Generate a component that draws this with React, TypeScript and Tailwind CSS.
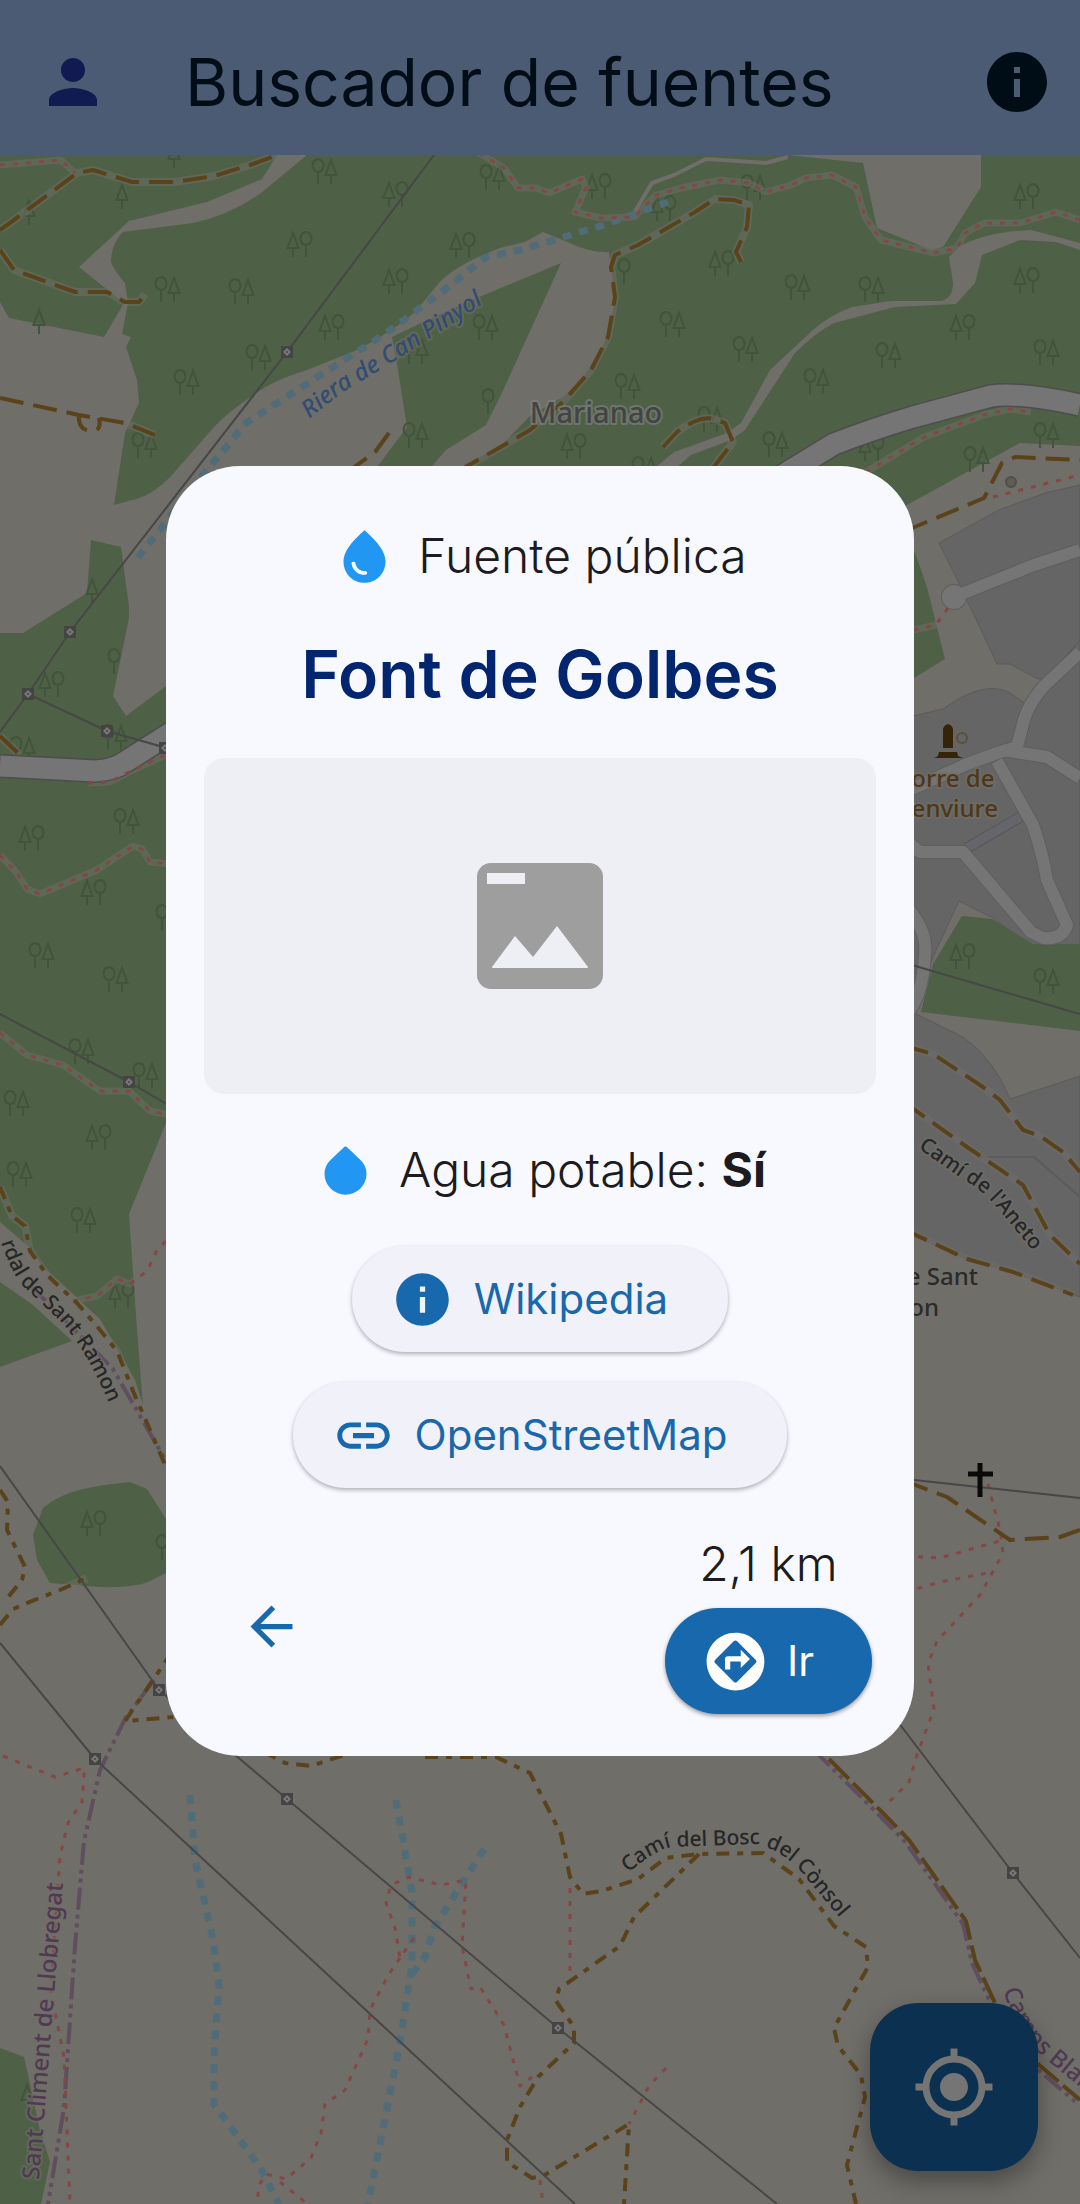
import React from "react";
import {
  MdArrowBack,
  MdAssistantDirection,
  MdInfo,
  MdLink,
  MdMyLocation,
  MdPerson,
  MdWaterDrop,
} from "react-icons/md";

type TreeKind = "OA" | "AO" | "O" | "A";

const trees: [number, number, TreeKind][] = [
  [325, 172, "OA"], [396, 195, "AO"], [493, 178, "OA"], [300, 245, "AO"], [463, 246, "AO"],
  [168, 290, "OA"], [242, 292, "OA"], [396, 282, "AO"], [332, 328, "AO"], [486, 328, "OA"],
  [259, 358, "OA"], [187, 383, "OA"], [416, 352, "OA"], [488, 402, "O"], [416, 436, "OA"],
  [145, 446, "OA"], [599, 187, "AO"], [664, 209, "AO"], [1027, 197, "AO"], [624, 272, "O"],
  [722, 264, "AO"], [798, 288, "OA"], [872, 290, "OA"], [1027, 281, "AO"], [673, 325, "OA"],
  [963, 328, "AO"], [746, 350, "OA"], [889, 356, "OA"], [1047, 353, "OA"], [628, 387, "OA"],
  [817, 382, "OA"], [711, 420, "OA"], [574, 447, "AO"], [776, 445, "OA"], [1047, 436, "OA"],
  [977, 460, "OA"], [872, 449, "AO"], [645, 470, "OA"], [754, 188, "OA"], [122, 197, "A"],
  [29, 213, "A"], [174, 156, "A"], [39, 322, "A"], [92, 591, "A"], [52, 685, "AO"],
  [114, 662, "O"], [32, 839, "AO"], [127, 822, "OA"], [94, 893, "AO"], [162, 918, "O"],
  [42, 956, "OA"], [116, 980, "OA"], [82, 1052, "OA"], [146, 1076, "OA"], [17, 1104, "OA"],
  [99, 1138, "AO"], [23, 750, "OA"], [115, 738, "OA"], [20, 1175, "OA"], [84, 1221, "OA"],
  [122, 1296, "AO"], [94, 1524, "AO"], [162, 1548, "O"], [27, 2097, "A"],
];

const round = (x: number) => `M${x} 12V0a5.5 6.5 0 1 1 0.1 0`;
const pine = (x: number) => `M${x} 12V3M${x} -12l-5.5 15h11z`;

const treeShape: Record<TreeKind, string> = {
  OA: round(-7) + pine(6),
  AO: pine(-7) + round(6),
  O: round(0),
  A: pine(0),
};

const forests = [
  "M0 155H1080V446L1020 443 905 506 914 550 927 587 945 659 914 678 200 686 200 1080 166 1123 129 1214 137 1330 143 1405 135 1380 100 1319 43 1267 28 1246 0 1222Z",
  "M0 1282 33 1305 72 1341 0 1367Z",
  "M33 1535 43 1508Q60 1494 83 1489T130 1482L147 1489 166 1519 190 1545 166 1573 150 1581Q135 1588 100 1587L50 1583 37 1560Z",
  "M0 2048 24 2057 32 2093 39 2126 50 2162 41 2204H0Z",
];

const clearings = [
  "M277 155 262 179 207 202 129 221 79 267 124 303 104 337 9 318 0 302V633H23L87 593 91 540 121 547 129 607V618L113 696 126 716 166 686H464V465L500 447 530 416 563 397 581 380 600 353 609 330 615 300 609 252Q590 253 570 243L543 232 525 242 500 248Q455 265 439 283L414 313Q390 333 357 350L307 370Q275 380 261 390 230 410 214 427L179 467Q155 496 132 500L114 505 125 433 139 403 137 380 126 347 131 337 122 334 128 303 125 283Q110 265 111 260 112 243 123 232L193 223Q230 215 261 193L307 155Z",
  "M788 155 863 163 877 228 931 250 943 247 981 187V155Z",
  "M1080 243 1031 230Q985 232 959 247L949 257 953 283Q953 298 941 301H891L852 307Q830 315 813 330L770 370 741 423 727 433 674 452 656 467H677L691 455 731 440 745 430 795 353Q815 333 834 323L895 307 956 304 975 283 982 255 1020 240 1056 242 1080 250Z",
];

const woods = [
  "M561 263 479 297 421 323 392 337 398 370 407 427 378 466H432L446 450 486 425 500 397Z",
];

const blocks = [
  "M939 543 977 522 999 510 1045 493 1080 485V640L1048 677 1038 679 1010 664H997L967 600 961 587Z",
  "M900 719 943 709 960 698Q990 682 1010 693L1026 704 1048 677 1080 640V945H1030L993 918 959 901 933 957 914 1010H900Z",
  "M900 1006 963 1037Q995 1060 1010 1099L1080 1076V1297L1013 1272 967 1259 900 1230Z",
];

const park = "M962 916 992 919 1033 944H1080V1031L921 1012 933 964Z";

const streets = [
  "M1080 652 1043 687Q1028 705 1024 720L1017 747 1000 752 967 764 905 792",
  "M1003 750 1047 757 1080 778",
  "M997 761 1033 825Q1043 855 1047 880L1067 925Q1062 940 1043 938L1031 932 963 852H920L905 840",
  "M905 905Q928 930 925 955 922 1000 905 1015",
  "M954 597 1034 565 1080 550",
];

const highways = [
  "M760 490 788 472 834 444Q870 430 913 417L991 396Q1020 392 1080 405",
  "M0 766 95 771Q115 770 125 762L180 727",
];

const tracks = [
  "M0 230 14 220 77 173 93 170 132 182H175L214 176 250 165 277 155",
  "M0 250 14 270 75 292H107L125 302H139L145 294",
  "M0 398 79 415 125 423 155 435",
  "M79 415Q78 428 87 430M99 418Q101 426 97 430",
  "M741 262 736 252 747 227 749 205 734 200 715 199 695 212 638 245 615 255 611 267 615 297 608 337 591 370 563 402 530 430 464 468",
  "M389 433 375 452 353 468",
  "M663 447 677 432Q700 415 713 419L725 423 733 442 713 468",
  "M905 531 984 498 1002 463 1015 457 1080 460",
  "M905 1046 933 1054 983 1087 1000 1100 1023 1130 1040 1136 1063 1152 1080 1172",
  "M905 1103 967 1147 1023 1185 1050 1235 1080 1264",
  "M905 1230 967 1259 1013 1272 1073 1295",
  "M905 1481 947 1497 1010 1540 1060 1537 1080 1530",
  "M0 736 20 755",
];

const shortTracks = [
  "M0 1187 12 1216 25 1226 30 1251 47 1275 77 1303 100 1330 117 1351 133 1391 170 1476",
  "M0 1490 8 1502 7 1530 25 1567 22 1580 5 1601",
  "M0 1625 13 1609 37 1599 60 1590 87 1578",
  "M172 1652 125 1721 175 1717",
  "M264 1752 285 1763 311 1766 347 1754",
  "M425 1757 496 1757 530 1773 561 1834 570 1877 583 1894 602 1891 638 1879 666 1858 699 1854 763 1853 799 1879 834 1926 866 1947 868 1967 834 2028 838 2046 861 2075 865 2097 847 2165 856 2204",
  "M699 1854 634 1917 620 1946 559 1989 556 2001 574 2027V2043L538 2077 520 2107 507 2140V2162L532 2178 543 2176 629 2124 624 2204",
];

const footpaths = [
  "M0 165 61 160 75 173",
  "M479 153 504 168 518 188H536L549 193 582 179 586 187 575 212 600 218 634 217 656 195 681 188 720 180 749 183 766 192 791 185 806 178 832 175 856 187 865 217 881 240 934 253 957 248 965 233 984 223H1020L1056 212 1080 220",
  "M866 472 924 437 984 415 1009 409 1031 412",
  "M993 497 1080 475",
  "M948 608 936 625 905 632",
  "M0 855 17 873 27 889 40 894 97 870 133 846 142 849 150 862 170 864",
  "M0 1033 27 1055 63 1065 100 1091H129L150 1111 170 1115",
  "M88 783 110 782 133 770 170 753",
  "M73 1301 97 1296 117 1279 130 1284 147 1271 158 1248 170 1238",
  "M988 1484 1000 1530 1003 1553 980 1595 937 1641 928 1664 934 1709 917 1755 909 1782 884 1807",
  "M905 1556 940 1558 1003 1540",
  "M905 1592 940 1582 993 1572",
  "M3 1756 55 1777 84 1768V1778L82 1802 68 1823 60 1856 58 1885 51 1992 64 2057 70 2204",
  "M414 1938 400 1958 395 1928 386 1903 391 1885 409 1877 441 1885 466 1880 462 1946 471 1989 480 1987 504 2025 520 2086 532 2077",
  "M400 1958 389 1974 370 2010 368 2039 345 2090 325 2104 321 2133 311 2158 286 2179 266 2174 258 2187V2204M280 2182 305 2202",
  "M570 1888V1975",
  "M666 2068 649 2086 629 2124",
  "M540 2180 543 2204",
];

const streams = [
  "M668 202 604 225 520 250 486 257 447 288 386 333 246 423 207 470 136 560",
  "M190 1795 195 1860 213 1939 219 1985 214 2054V2104L261 2169 279 2204",
  "M396 1800 412 1892V1964L400 2043 368 2204",
  "M484 1849 434 1928 425 1957 411 1975",
];

const powerLines = [
  "M434 155 287 352 70 632 28 694 0 732M28 694 107 731 170 749",
  "M0 1014 129 1082 170 1106",
  "M0 1466 159 1690 287 1799 558 2028 777 2204",
  "M0 1643 95 1759 560 2190 575 2204",
  "M895 1718 1013 1873 1080 1958",
  "M905 963 1080 1014",
  "M905 1479 1080 1498",
];

const pylons = [
  [287, 352], [70, 632], [28, 694], [107, 731], [165, 748], [129, 1082],
  [159, 1690], [287, 1799], [558, 2028], [95, 1759], [1013, 1873],
];

const boundaries = [
  "M154 1680 125 1719 100 1770 84 1841 75 1946 64 2108 48 2204",
  "M30 1285 113 1369 170 1468",
  "M814 1750 878 1814 906 1843 963 1924 972 1963 992 2006 1035 2067 1078 2104",
];

function Lines({ paths, ...rest }: { paths: string[] } & React.SVGProps<SVGGElement>) {
  return (
    <g fill="none" strokeLinejoin="round" {...rest}>
      {paths.map((d) => (
        <path key={d} d={d} />
      ))}
    </g>
  );
}

function Areas({ paths, ...rest }: { paths: string[] } & React.SVGProps<SVGGElement>) {
  return (
    <g {...rest}>
      {paths.map((d) => (
        <path key={d} d={d} />
      ))}
    </g>
  );
}

function TerrainMap() {
  return (
    <svg
      role="img"
      aria-label="Mapa de Marianao"
      viewBox="0 155 1080 2049"
      preserveAspectRatio="xMidYMid slice"
      className="absolute inset-0 h-full w-full font-['Noto_Sans',sans-serif]"
    >
      <defs>
        <path id="riera" d="M309 419Q345 389 357 384L404 355 500 293" />
        <path id="ramon" d="M1 1242Q10 1270 22 1285L60 1321Q88 1350 116 1420" />
        <path id="aneto" d="M918 1148 958 1176Q983 1190 998 1209L1045 1265" />
        <path id="bosc" d="M628 1873Q655 1850 672 1847L755 1844Q785 1850 808 1880L860 1942" />
        <path id="camps" d="M1003 1990Q1015 2030 1042 2056L1120 2120" />
        <path id="climent" d="M39 2180 65 1860" />
      </defs>
      <rect y="155" width="1080" height="2049" fill="#706e69" />
      <Areas paths={forests} fill="#4e6046" />
      <Areas paths={clearings} fill="#706e69" />
      <Areas paths={woods} fill="#4e6046" />
      <g fill="none" stroke="#42543b" strokeWidth="2">
        {trees.map(([x, y, kind]) => (
          <path key={`${x}-${y}`} d={treeShape[kind]} transform={`translate(${x} ${y})`} />
        ))}
      </g>
      <Areas paths={blocks} fill="#656565" stroke="#5c5b5a" strokeWidth="1" />
      <path d={park} fill="#4e6046" />
      <g fill="none" stroke="#42543b" strokeWidth="2">
        <path d={treeShape.AO} transform="translate(963 957)" />
        <path d={treeShape.OA} transform="translate(1047 982)" />
      </g>
      <path d="M967 848 1022 816" stroke="#56555a" strokeWidth="11" />
      <path d="M967 848 1022 816" stroke="#67656c" strokeWidth="9" />
      <Lines paths={streets} stroke="#5e5e5e" strokeWidth="14" />
      <circle cx="954" cy="597" r="13" fill="#5e5e5e" />
      <Lines paths={streets} stroke="#757575" strokeWidth="12" />
      <circle cx="954" cy="597" r="12" fill="#757575" />
      <path d="M977 1157H1034Q1055 1175 1080 1197" fill="none" stroke="#5b5b5b" strokeWidth="2" />
      <path d="M788 157 766 163 706 159 674 175 652 183 634 213" fill="none" stroke="#706e69" strokeWidth="4" />
      <Lines paths={footpaths} stroke="#706e69" strokeWidth="7" opacity="0.5" />
      <Lines paths={tracks} stroke="#706e69" strokeWidth="8" opacity="0.5" />
      <Lines paths={shortTracks} stroke="#706e69" strokeWidth="8" opacity="0.5" />
      <Lines paths={highways} stroke="#4d4d4d" strokeWidth="24" />
      <Lines paths={highways} stroke="#757575" strokeWidth="21" />
      <Lines paths={streams} stroke="#4f6c78" strokeWidth="7" strokeDasharray="9 8" />
      <Lines paths={boundaries} stroke="#5f4f5e" strokeWidth="4" strokeDasharray="22 5 4 5 4 5" />
      <Lines paths={footpaths} stroke="#854743" strokeWidth="3" strokeDasharray="5 8" />
      <Lines paths={tracks} stroke="#5a431a" strokeWidth="4" strokeDasharray="24 10" />
      <Lines paths={shortTracks} stroke="#5a431a" strokeWidth="4" strokeDasharray="13 8 6 8" />
      <path
        d="M829 1759 881 1811 909 1840 966 1921 975 1960 995 2003 1038 2064 1080 2100"
        fill="none"
        stroke="#5a431a"
        strokeWidth="4"
        strokeDasharray="28 6"
      />
      <Lines paths={powerLines} stroke="#474747" strokeWidth="2" />
      {pylons.map(([x, y]) => (
        <g key={`${x}-${y}`} transform={`translate(${x} ${y})`}>
          <rect x="-6" y="-6" width="12" height="12" fill="#444" />
          <path d="M0 -4 4 0 0 4-4 0Z" fill="#777" />
          <circle r="1" fill="#444" />
        </g>
      ))}
      <circle cx="1011" cy="482" r="5" fill="#625c57" stroke="#524e4a" strokeWidth="2" />
      <circle cx="962" cy="738" r="5" fill="none" stroke="#5a5040" strokeWidth="2" />
      <path
        d="M943 748V729Q944 725 948 724 952 725 953 729V748ZM939 752H957L958 756 963 758H934L938 756Z"
        fill="#352407"
      />
      <path d="M968 1474H993M980 1463V1497" stroke="#0a0a0a" strokeWidth="5" />
      <g
        stroke="#706e69"
        strokeWidth="4"
        strokeOpacity="0.6"
        strokeLinejoin="round"
        fontWeight="500"
        style={{ paintOrder: "stroke" }}
      >
        <text x="596" y="423" fontSize="29" textAnchor="middle" fill="#444444" stroke="#858585">
          Marianao
        </text>
        <g fontSize="24" textAnchor="middle" fill="#4d3817">
          <text x="947" y="787">Torre de</text>
          <text x="947" y="817">Benviure</text>
        </g>
        <g fontSize="24" textAnchor="end" fill="#2b2b2b">
          <text x="978" y="1285">de Sant</text>
          <text x="939" y="1316">Ramon</text>
        </g>
        <text fontSize="24" fontStyle="italic" fill="#324c72">
          <textPath href="#riera">Riera de Can Pinyol</textPath>
        </text>
        <text fontSize="21" fill="#262626">
          <textPath href="#ramon">rdal de Sant Ramon</textPath>
        </text>
        <text fontSize="21" fill="#262626">
          <textPath href="#aneto">Camí de l'Aneto</textPath>
        </text>
        <text fontSize="21" fill="#262626">
          <textPath href="#bosc">Camí del Bosc del Cònsol</textPath>
        </text>
        <text fontSize="24" fill="#503a52">
          <textPath href="#camps">Camps Blancs</textPath>
        </text>
        <text fontSize="24" fill="#503a52">
          <textPath href="#climent">Sant Climent de Llobregat</textPath>
        </text>
      </g>
    </svg>
  );
}

function RoundDrop() {
  return (
    <svg viewBox="0 0 24 24" className="size-[63px] text-[#2196f3]" fill="currentColor" aria-hidden="true">
      <path d="M17.7 8l-5-4.8a1 1 0 0 0-1.4 0L6.3 8A7.4 7.4 0 0 0 4 13.2a8 8 0 0 0 16 0A7.4 7.4 0 0 0 17.7 8z" />
    </svg>
  );
}

function PicturePlaceholder() {
  return (
    <svg viewBox="0 0 126 126" className="size-[126px]" role="img" aria-label="Sin imagen">
      <rect width="126" height="126" rx="14" fill="#9e9e9e" />
      <path d="M10 10H48V21H10Z" fill="#eeeff5" />
      <path d="M15 104 38 73 56 94 80 63 111 104Q111 105 110 105H16Q15 105 15 104Z" fill="#eeeff5" />
    </svg>
  );
}

function LinkButton({ href, icon, children }: { href: string; icon: React.ReactNode; children: React.ReactNode }) {
  return (
    <a
      href={href}
      className="flex h-[106px] items-center gap-5 rounded-full bg-[#f1f2f9] pr-[60px] pl-[39px] text-[42px] font-normal text-[#1868ad] shadow-[0_2px_4px_rgba(0,0,0,0.3)]"
    >
      {icon}
      {children}
    </a>
  );
}

export default function App() {
  return (
    <div className="relative flex min-h-screen flex-col bg-[#706e69] font-[Inter,sans-serif]">
      <header className="z-10 flex h-[155px] items-center bg-[#4a5b73] pr-[27px] pl-[37px] pt-2">
        <button type="button" aria-label="Perfil" className="text-[#121a52]">
          <MdPerson className="size-[72px]" />
        </button>
        <h1 className="ml-[76px] flex-1 text-[66px] leading-[84px] text-[#000d17]">Buscador de fuentes</h1>
        <button type="button" aria-label="Información" className="text-[#000d17]">
          <MdInfo className="size-[72px]" />
        </button>
      </header>

      <main className="relative flex-1">
        <TerrainMap />
        <button
          type="button"
          aria-label="Mi ubicación"
          className="absolute right-[42px] bottom-[33px] grid size-[168px] place-items-center rounded-[48px] bg-[#0b3050] text-[#757575] shadow-[0_10px_24px_rgba(0,0,0,0.35)]"
        >
          <MdMyLocation className="size-[84px]" />
        </button>
      </main>

      <div className="absolute inset-0 z-20 flex items-center justify-center px-10 pt-[18px]">
        <section
          role="dialog"
          aria-labelledby="fountain-name"
          className="flex w-full max-w-[748px] flex-col items-center rounded-[74px] bg-[#f8f9ff] px-[38px] pt-[58px] pb-[42px] text-[48px] leading-[64px] font-light text-[#1c1b20]"
        >
          <p className="flex items-center gap-[22px]">
            <MdWaterDrop className="size-[63px] text-[#2196f3]" />
            Fuente pública
          </p>
          <h2 id="fountain-name" className="mt-11 text-[66px] leading-[84px] font-semibold text-[#01256e]">
            Font de Golbes
          </h2>
          <div className="mt-[42px] grid aspect-[2/1] w-full place-items-center rounded-[20px] bg-[#eeeff5]">
            <PicturePlaceholder />
          </div>
          <p className="mt-11 flex items-center gap-[22px]">
            <RoundDrop />
            <span>
              Agua potable: <strong className="font-bold">Sí</strong>
            </span>
          </p>
          <div className="mt-11 flex flex-col items-center gap-[30px]">
            <LinkButton href="#wikipedia" icon={<MdInfo className="size-[63px]" />}>
              Wikipedia
            </LinkButton>
            <LinkButton href="#openstreetmap" icon={<MdLink className="size-[63px]" />}>
              OpenStreetMap
            </LinkButton>
          </div>
          <div className="mt-[50px] flex w-full items-center justify-between pr-1 pl-9">
            <button type="button" aria-label="Volver" className="text-[#1868ad]">
              <MdArrowBack className="size-[63px]" />
            </button>
            <div className="flex flex-col items-center gap-[18px]">
              <span className="leading-[52px]">2,1 km</span>
              <button
                type="button"
                className="flex h-[106px] items-center gap-5 rounded-full bg-[#1868ad] pr-[58px] pl-[39px] text-[42px] font-normal text-white shadow-[0_2px_4px_rgba(0,0,0,0.4)]"
              >
                <MdAssistantDirection className="size-[63px]" />
                Ir
              </button>
            </div>
          </div>
        </section>
      </div>
    </div>
  );
}
